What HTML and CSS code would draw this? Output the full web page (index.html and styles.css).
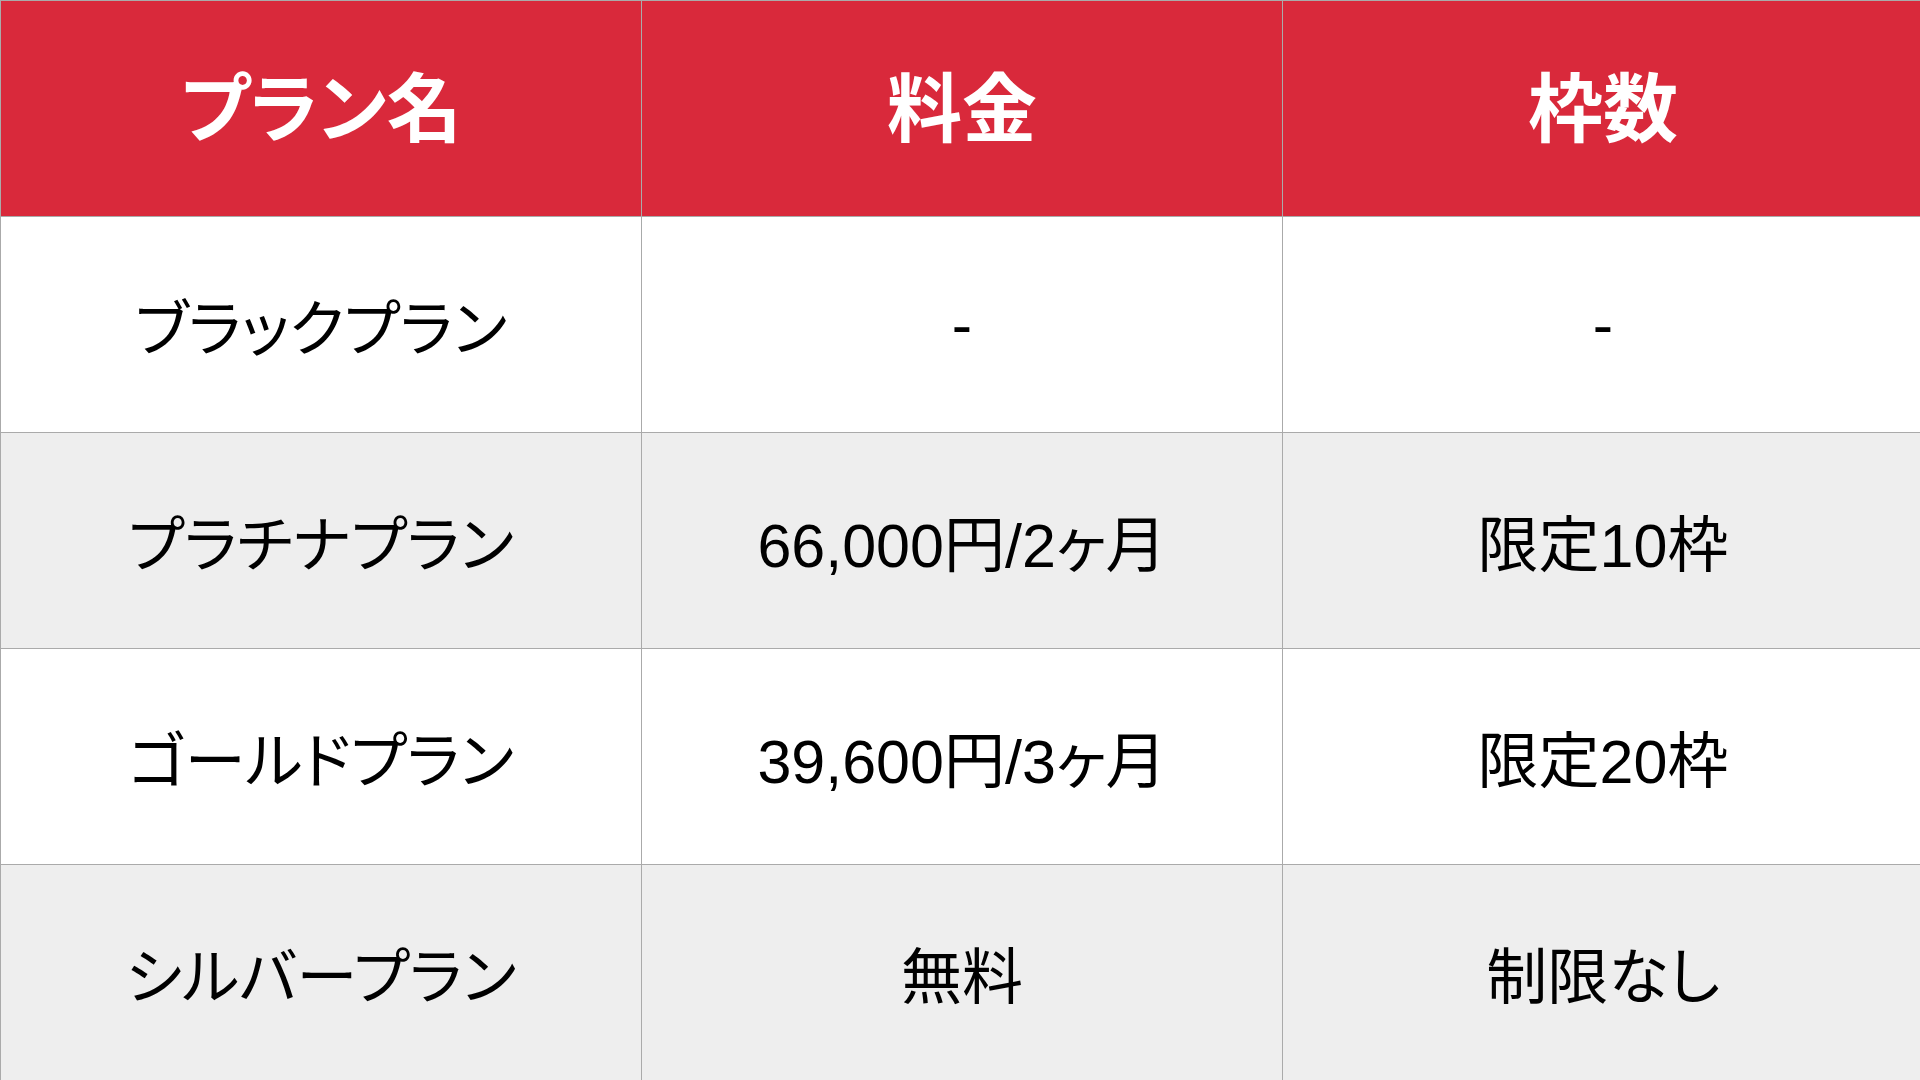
FILE: index.html
```html
<!DOCTYPE html>
<html lang="ja">
<head>
<meta charset="utf-8">
<link rel="stylesheet" href="styles.css">
</head>
<body>
<table class="plans">
  <thead>
    <tr><th>プラン名</th><th>料金</th><th>枠数</th></tr>
  </thead>
  <tbody>
    <tr><td>ブラックプラン</td><td>-</td><td>-</td></tr>
    <tr class="alt"><td>プラチナプラン</td><td>66,000円/2ヶ月</td><td>限定10枠</td></tr>
    <tr><td>ゴールドプラン</td><td>39,600円/3ヶ月</td><td>限定20枠</td></tr>
    <tr class="alt"><td>シルバープラン</td><td>無料</td><td>制限なし</td></tr>
  </tbody>
</table>
</body>
</html>
```
FILE: styles.css
```css
html, body {
  margin: 0;
  padding: 0;
  background: #ffffff;
}
.plans {
  width: 1920px;
  height: 1080px;
  border-collapse: collapse;
  table-layout: fixed;
  font-family: "Liberation Sans", "Noto Sans CJK JP", sans-serif;
  font-feature-settings: "palt";
}
.plans th, .plans td {
  width: 640px;
  height: 215px;
  border: 1px solid #aaaaaa;
  text-align: center;
  vertical-align: middle;
  padding: 0;
}
.plans th {
  height: 205px;
  background: #d9293b;
  color: #ffffff;
  font-size: 75px;
  font-weight: 700;
  padding-bottom: 10px;
}
.plans td {
  color: #000000;
  font-size: 61px;
  font-weight: 400;
}
.plans tr.alt td {
  background: #eeeeee;
}
```
